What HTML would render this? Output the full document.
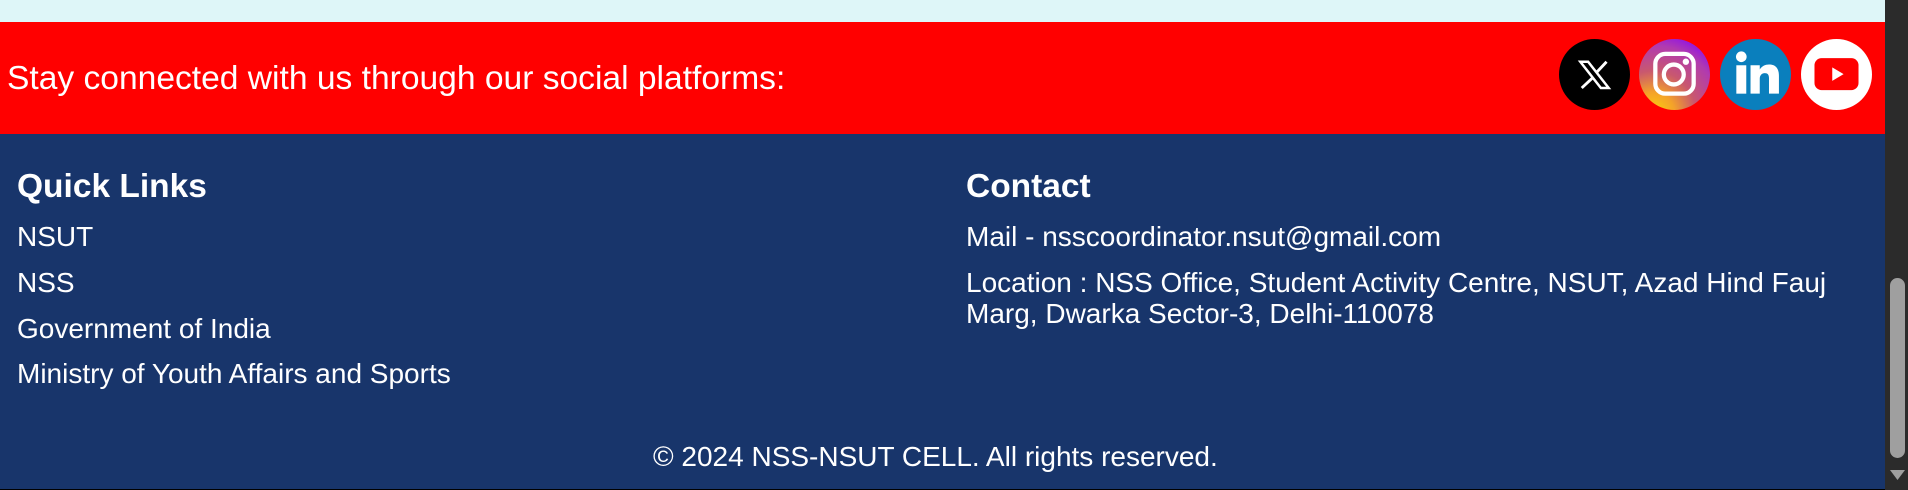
<!DOCTYPE html>
<html><head><meta charset="utf-8"><style>
*{margin:0;padding:0;box-sizing:border-box}
body{width:1908px;height:490px;overflow:hidden;background:#18356b;font-family:"Liberation Sans",Arial,sans-serif;color:#fff;position:relative}
.t{position:absolute;white-space:nowrap;font-size:28px;line-height:31px}
.h{position:absolute;font-size:33.5px;font-weight:bold;line-height:36px}
svg.i{position:absolute;top:39px;width:71px;height:71px}
</style></head><body>
<div style="position:absolute;left:0;top:0;width:1885px;height:22px;background:#def6f8"></div>
<div style="position:absolute;left:0;top:22px;width:1885px;height:112px;background:#ff0000"></div>
<div class="t" style="left:7px;top:60px;font-size:33.6px;line-height:38px">Stay connected with us through our social platforms:</div>

<svg class="i" style="left:1559px" viewBox="0 0 100 100"><circle cx="50" cy="50" r="50" fill="#000"/>
<path d="M30 32h11l29 37h-11z" fill="none" stroke="#fff" stroke-width="3.5"/>
<path d="M67 32L53 47M47 55L32 69" stroke="#fff" stroke-width="4"/></svg>

<svg class="i" style="left:1639px" viewBox="0 0 100 100"><defs><radialGradient id="g" cx="0.2" cy="1.05" r="1.2"><stop offset="0" stop-color="#fdd10a"/><stop offset="0.25" stop-color="#f4a22a"/><stop offset="0.5" stop-color="#c9586e"/><stop offset="0.8" stop-color="#b13ab0"/><stop offset="1" stop-color="#8a0bf0"/></radialGradient></defs>
<circle cx="50" cy="50" r="50" fill="url(#g)"/>
<rect x="23" y="21" width="54" height="56" rx="14" fill="none" stroke="#fff" stroke-width="6"/>
<circle cx="49" cy="50" r="14" fill="none" stroke="#fff" stroke-width="6"/>
<circle cx="66" cy="32" r="4.5" fill="#fff"/></svg>

<svg class="i" style="left:1720px" viewBox="0 0 100 100"><circle cx="50" cy="50" r="50" fill="#0a7fbd"/>
<circle cx="30" cy="25" r="7.5" fill="#fff"/>
<rect x="23" y="37" width="14" height="40" fill="#fff"/>
<path d="M43 37h13v6c3-5 8-7 13-7c9 0 14 5 14 16v25h-14v-22c0-5-2-7-6-7s-7 3-7 8v21h-13z" fill="#fff"/></svg>

<svg class="i" style="left:1801px" viewBox="0 0 100 100"><circle cx="50" cy="50" r="50" fill="#fff"/>
<rect x="19" y="27" width="62" height="45" rx="10" fill="#ff0000"/>
<path d="M44 40v19l16-9.5z" fill="#fff"/></svg>

<div class="h" style="left:17px;top:169px">Quick Links</div>
<div class="t" style="left:17px;top:221px">NSUT</div>
<div class="t" style="left:17px;top:267px">NSS</div>
<div class="t" style="left:17px;top:313px">Government of India</div>
<div class="t" style="left:17px;top:358px">Ministry of Youth Affairs and Sports</div>

<div class="h" style="left:966px;top:169px">Contact</div>
<div class="t" style="left:966px;top:221px">Mail - nsscoordinator.nsut@gmail.com</div>
<div class="t" style="left:966px;top:267px">Location : NSS Office, Student Activity Centre, NSUT, Azad Hind Fauj<br>Marg, Dwarka Sector-3, Delhi-110078</div>

<div class="t" style="left:653px;top:441px">© 2024 NSS-NSUT CELL. All rights reserved.</div>

<div style="position:absolute;left:0;top:489px;width:1885px;height:1px;background:#000"></div>
<div style="position:absolute;left:1885px;top:0;width:23px;height:490px;background:#2b2b2b"></div>
<div style="position:absolute;left:1890px;top:278px;width:15px;height:180px;border-radius:8px;background:#9f9f9f"></div>
<svg style="position:absolute;left:1890px;top:469px" width="15" height="12" viewBox="0 0 15 12"><path d="M0 1h15l-7.5 10z" fill="#9f9f9f"/></svg>
</body></html>
